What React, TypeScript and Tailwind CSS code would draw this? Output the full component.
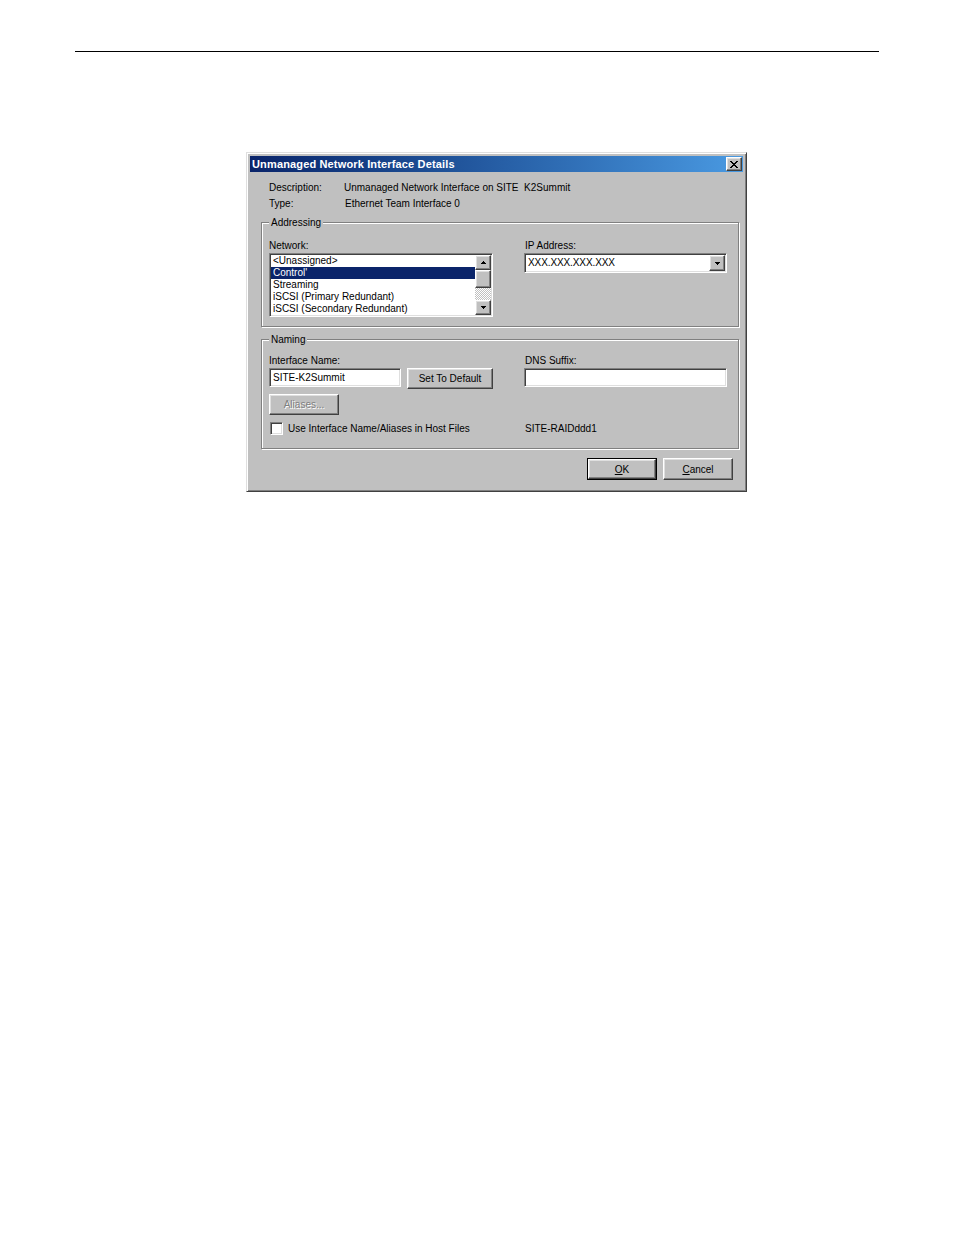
import React from "react";

// classic 3D bevels
const raised =
  "border border-t-white border-l-white border-r-[#404040] border-b-[#404040] shadow-[inset_-1px_-1px_0_#808080,inset_1px_1px_0_#dfdfdf]";
const sunken =
  "border border-t-[#808080] border-l-[#808080] border-r-white border-b-white shadow-[inset_1px_1px_0_#404040,inset_-1px_-1px_0_#dfdfdf]";
const etched =
  "border border-[#808080] shadow-[inset_1px_1px_0_#fff,1px_1px_0_#fff]";

const ArrowUp = () => (
  <svg width="5" height="3" viewBox="0 0 5 3" shapeRendering="crispEdges">
    <rect x="2" y="0" width="1" height="1" fill="#000" />
    <rect x="1" y="1" width="3" height="1" fill="#000" />
    <rect x="0" y="2" width="5" height="1" fill="#000" />
  </svg>
);

const ArrowDown = () => (
  <svg width="5" height="3" viewBox="0 0 5 3" shapeRendering="crispEdges">
    <rect x="0" y="0" width="5" height="1" fill="#000" />
    <rect x="1" y="1" width="3" height="1" fill="#000" />
    <rect x="2" y="2" width="1" height="1" fill="#000" />
  </svg>
);

const CloseGlyph = () => (
  <svg width="8" height="7" viewBox="0 0 8 7" shapeRendering="crispEdges">
    <path
      d="M0 0h2v1h1v1h2V1h1V0h2v1H7v1H6v1H5v1h1v1h1v1h1v1H6V6H5V5H3v1H2v1H0V6h1V5h1V4h1V3H2V2H1V1H0z"
      fill="#000"
    />
  </svg>
);

const TitleBar = () => (
  <div className="h-[16px] flex items-center justify-between bg-linear-to-r from-[#0a246a] to-[#4a9ae2]">
    <span className="pl-[2px] text-white font-bold text-[11px] leading-[16px] tracking-[0.15px]">
      Unmanaged Network Interface Details
    </span>
    <div
      className={`mr-[1px] w-[16px] h-[14px] bg-[#c0c0c0] flex items-center justify-center ${raised}`}
    >
      <CloseGlyph />
    </div>
  </div>
);

const networks = [
  "<Unassigned>",
  "Control'",
  "Streaming",
  "iSCSI (Primary Redundant)",
  "iSCSI (Secondary Redundant)",
];

const NetworkList = () => (
  <div className={`w-[224px] h-[64px] bg-white flex p-[1px] ${sunken}`}>
    <div className="flex-1 overflow-hidden">
      {networks.map((n, i) => (
        <div
          key={n}
          className={`h-[12px] leading-[12px] pl-[2px] whitespace-nowrap ${
            i === 1 ? "bg-[#0a246a] text-white" : ""
          }`}
        >
          {n}
        </div>
      ))}
    </div>
    <div className="w-[16px] flex flex-col">
      <div
        className={`h-[15px] bg-[#c0c0c0] flex items-center justify-center ${raised}`}
      >
        <ArrowUp />
      </div>
      <div className={`h-[18px] bg-[#c0c0c0] ${raised}`} />
      <div className="flex-1 bg-[repeating-conic-gradient(#ffffff_0_25%,#c0c0c0_0_50%)] bg-[length:2px_2px]" />
      <div
        className={`h-[15px] bg-[#c0c0c0] flex items-center justify-center ${raised}`}
      >
        <ArrowDown />
      </div>
    </div>
  </div>
);

const IpCombo = () => (
  <div className={`w-[203px] h-[20px] bg-white flex p-[1px] ${sunken}`}>
    <div className="flex-1 pl-[2px] leading-[16px] text-[10px] tracking-[-0.1px]">
      XXX.XXX.XXX.XXX
    </div>
    <div
      className={`w-[16px] bg-[#c0c0c0] flex items-center justify-center ${raised}`}
    >
      <ArrowDown />
    </div>
  </div>
);

export default function App() {
  return (
    <div className="w-[954px] h-[1235px] bg-white overflow-hidden font-['Liberation_Sans',Arial,sans-serif] text-[10px] text-black">
      <div className="ml-[75px] mt-[51px] w-[804px] h-px bg-black" />

      <div className="ml-[246px] mt-[100px] w-[501px] h-[340px] bg-[#c0c0c0] p-[3px] border border-t-[#dfdfdf] border-l-[#dfdfdf] border-r-[#404040] border-b-[#404040] shadow-[inset_1px_1px_0_#fff,inset_-1px_-1px_0_#808080]">
        <TitleBar />

        <div className="mt-[8px] pl-[19px]">
          <div className="flex h-[16px] leading-[16px]">
            <span className="w-[75px]">Description:</span>
            <span>Unmanaged Network Interface on SITE&nbsp; K2Summit</span>
          </div>
          <div className="flex h-[16px] leading-[16px]">
            <span className="w-[76px]">Type:</span>
            <span>Ethernet Team Interface 0</span>
          </div>
        </div>

        <fieldset
          className={`ml-[11px] mt-[4px] w-[478px] px-[7px] pt-[10px] pb-[9px] ${etched}`}
        >
          <legend className="px-[2px] leading-[13px] bg-[#c0c0c0]">
            Addressing
          </legend>
          <div className="flex">
            <div className="w-[255px]">
              <div className="h-[13px] leading-[13px] mb-[1px]">Network:</div>
              <NetworkList />
            </div>
            <div>
              <div className="h-[13px] leading-[13px] mb-[1px] pl-[1px]">
                IP Address:
              </div>
              <IpCombo />
            </div>
          </div>
        </fieldset>

        <fieldset
          className={`ml-[11px] mt-[6px] w-[478px] px-[7px] pt-[8px] pb-[13px] ${etched}`}
        >
          <legend className="px-[2px] leading-[13px] bg-[#c0c0c0]">
            Naming
          </legend>
          <div className="grid grid-cols-[255px_203px]">
            <div className="h-[13px] leading-[13px] mb-[1px]">
              Interface Name:
            </div>
            <div className="h-[13px] leading-[13px] mb-[1px] pl-[1px]">
              DNS Suffix:
            </div>

            <div className="flex items-start">
              <div
                className={`w-[132px] h-[19px] bg-white p-[1px] pl-[3px] leading-[15px] ${sunken}`}
              >
                SITE-K2Summit
              </div>
              <div
                className={`ml-[6px] w-[86px] h-[21px] bg-[#c0c0c0] flex items-center justify-center ${raised}`}
              >
                Set To Default
              </div>
            </div>
            <div className={`w-[203px] h-[19px] bg-white ${sunken}`} />

            <div
              className={`mt-[5px] w-[70px] h-[21px] flex items-center justify-center text-[#808080] [text-shadow:1px_1px_0_#fff] ${raised}`}
            >
              Aliases...
            </div>
            <div />

            <div className="mt-[7px] h-[13px] flex items-center">
              <div className={`ml-[1px] w-[13px] h-[13px] bg-white ${sunken}`} />
              <span className="ml-[5px] leading-[13px] whitespace-nowrap">
                Use Interface Name/Aliases in Host Files
              </span>
            </div>
            <div className="mt-[7px] h-[13px] leading-[13px] pl-[1px]">
              SITE-RAIDddd1
            </div>
          </div>
        </fieldset>

        <div className="mt-[9px] pr-[10px] flex justify-end gap-[6px]">
          <div className="w-[70px] h-[22px] border border-black">
            <div
              className={`w-full h-full flex items-center justify-center ${raised}`}
            >
              <span>
                <span className="underline">O</span>K
              </span>
            </div>
          </div>
          <div
            className={`w-[70px] h-[22px] flex items-center justify-center ${raised}`}
          >
            <span>
              <span className="underline">C</span>ancel
            </span>
          </div>
        </div>
      </div>
    </div>
  );
}
